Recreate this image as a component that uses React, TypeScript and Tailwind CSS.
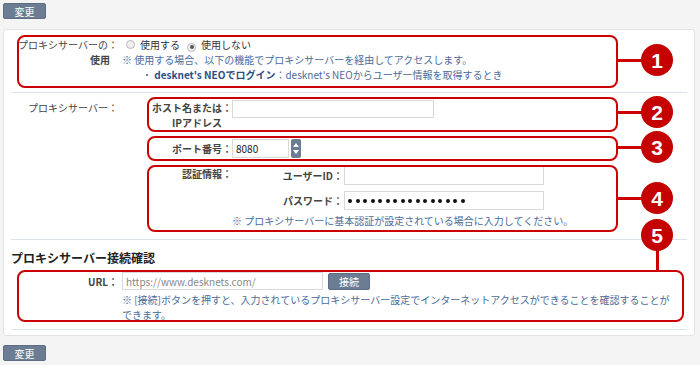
import React from "react";

const font = "font-['Noto_Sans_CJK_JP','Noto_Sans',sans-serif]";

function Btn({ label, className = "" }: { label: string; className?: string }) {
  return (
    <div
      className={`flex items-center justify-center rounded-[2px] border border-[#5d6d82] bg-[#6c7d93] text-[10px] text-white ${className}`}
    >
      {label}
    </div>
  );
}

function Radio({ checked }: { checked?: boolean }) {
  return (
    <span className="inline-flex h-[9px] w-[9px] items-center justify-center rounded-full border border-[#b8b8b8] bg-[#f0f0f0]">
      {checked && <span className="h-[4px] w-[4px] rounded-full bg-[#555]" />}
    </span>
  );
}

function Field({ className = "", children }: { className?: string; children?: React.ReactNode }) {
  return (
    <div className={`flex items-center border border-[#d9d9d9] bg-white px-[3px] text-[10px] text-[#222] ${className}`}>
      {children}
    </div>
  );
}

function Marker({ n, top }: { n: number; top: number }) {
  return (
    <div
      className="absolute left-[641px] flex h-[32px] w-[32px] items-center justify-center rounded-full bg-[#c40000] text-[21px] font-bold leading-none text-white font-['Liberation_Sans',sans-serif]"
      style={{ top }}
    >
      {n}
    </div>
  );
}

export default function App() {
  return (
    <div className={`relative h-[365px] w-[700px] overflow-hidden bg-[#f4f4f4] p-[3px] ${font}`}>
      <Btn label="変更" className="h-[16px] w-[43px]" />

      {/* Panel */}
      <div className="mt-[10px] h-[307px] w-[692px] rounded-[3px] border border-[#e3e3e3] bg-white px-[7px]">
        {/* proxy use */}
        <div className="flex border-b border-[#dce3ea] pb-[10px] pt-[7px] text-[10px] leading-[15px]">
          <div className="w-[107px] text-right text-[#444]">
            <div>プロキシサーバーの：</div>
            <div className="pr-[8px] font-bold">使用</div>
          </div>
          <div className="ml-[4px] text-[#333]">
            <div className="flex items-center">
              <span className="ml-[4px]"><Radio /></span>
              <span className="ml-[5px]">使用する</span>
              <span className="ml-[7px]"><Radio checked /></span>
              <span className="ml-[5px]">使用しない</span>
            </div>
            <div className="text-[#4b6b9c]">※ 使用する場合、以下の機能でプロキシサーバーを経由してアクセスします。</div>
            <div className="pl-[20px] text-[#4b6b9c]">
              ・ <span className="font-bold text-[#2c4d86]">desknet's NEOでログイン</span>：desknet's NEOからユーザー情報を取得するとき
            </div>
          </div>
        </div>

        {/* proxy server */}
        <div className="flex border-b border-[#dce3ea] pb-[7px] pt-[4px] text-[10px] leading-[15px]">
          <div className="w-[107px] pt-[3px] text-right text-[#444]">プロキシサーバー：</div>
          <div className="ml-[32px]">
            <div className="flex h-[35px] items-start">
              <div className="w-[82px] pt-[3px] text-right font-bold text-[#444]">
                <div>ホスト名または：</div>
                <div className="pr-[10px]">IPアドレス</div>
              </div>
              <Field className="mt-[3px] h-[18px] w-[202px]" />
            </div>
            <div className="mt-[4px] flex h-[25px] items-center">
              <div className="w-[82px] text-right font-bold text-[#444]">ポート番号：</div>
              <Field className="h-[19px] w-[57px]">8080</Field>
              <div className="ml-[2px] flex h-[19px] w-[10px] flex-col items-center justify-center gap-[3px] rounded-[2px] bg-[#6c7d93]">
                <svg width="6" height="4" viewBox="0 0 6 4"><path d="M3 0L6 4H0Z" fill="#fff" /></svg>
                <svg width="6" height="4" viewBox="0 0 6 4"><path d="M0 0H6L3 4Z" fill="#fff" /></svg>
              </div>
            </div>
            <div className="mt-[4px] flex h-[67px] items-start">
              <div className="w-[82px] pt-[1px] text-right font-bold text-[#444]">認証情報：</div>
              <div>
                <div className="mt-[1px] flex items-center">
                  <div className="w-[111px] text-right font-bold text-[#444]">ユーザーID：</div>
                  <Field className="ml-[1px] h-[19px] w-[200px]" />
                </div>
                <div className="mt-[6px] flex items-center">
                  <div className="w-[111px] text-right font-bold text-[#444]">パスワード：</div>
                  <Field className="ml-[1px] h-[19px] w-[200px] gap-[3.5px]">
                    {Array.from({ length: 16 }).map((_, i) => (
                      <span key={i} className="h-[4px] w-[4px] rounded-full bg-[#111]" />
                    ))}
                  </Field>
                </div>
                <div className="mt-[3px] text-[#4b6b9c]">※ プロキシサーバーに基本認証が設定されている場合に入力してください。</div>
              </div>
            </div>
          </div>
        </div>

        {/* connection check */}
        <div className="border-b border-[#dce3ea] pb-[7px] pt-[10px]">
          <div className="text-[12px] font-bold leading-[16px] text-[#222]">プロキシサーバー接続確認</div>
          <div className="mt-[6px] flex items-center text-[10px]">
            <div className="w-[107px] text-right font-bold text-[#444]">URL：</div>
            <Field className="ml-[4px] h-[18px] w-[201px] text-[#888]">https://www.desknets.com/</Field>
            <Btn label="接続" className="ml-[5px] h-[17px] w-[42px]" />
          </div>
          <div className="ml-[111px] mt-[2px] text-[10px] leading-[15px] text-[#4b6b9c]">
            ※ [接続]ボタンを押すと、入力されているプロキシサーバー設定でインターネットアクセスができることを確認することが
            <br />
            できます。
          </div>
        </div>
      </div>

      <Btn label="変更" className="mt-[9px] h-[16px] w-[43px]" />

      {/* annotations */}
      <div className="absolute left-[17px] top-[35px] h-[53px] w-[601px] rounded-[8px] border-2 border-[#cc0000]" />
      <div className="absolute left-[147px] top-[97px] h-[35px] w-[471px] rounded-[8px] border-2 border-[#cc0000]" />
      <div className="absolute left-[147px] top-[136px] h-[25px] w-[471px] rounded-[8px] border-2 border-[#cc0000]" />
      <div className="absolute left-[147px] top-[165px] h-[67px] w-[471px] rounded-[8px] border-2 border-[#cc0000]" />
      <div className="absolute left-[17px] top-[270px] h-[52px] w-[667px] rounded-[8px] border-2 border-[#cc0000]" />

      <div className="absolute left-[617px] top-[59px] h-[3px] w-[26px] bg-[#cc0000]" />
      <div className="absolute left-[617px] top-[111px] h-[3px] w-[26px] bg-[#cc0000]" />
      <div className="absolute left-[617px] top-[146px] h-[3px] w-[26px] bg-[#cc0000]" />
      <div className="absolute left-[617px] top-[197px] h-[3px] w-[26px] bg-[#cc0000]" />
      <div className="absolute left-[656px] top-[249px] h-[22px] w-[3px] bg-[#cc0000]" />

      <Marker n={1} top={44} />
      <Marker n={2} top={96} />
      <Marker n={3} top={131} />
      <Marker n={4} top={182} />
      <Marker n={5} top={219} />
    </div>
  );
}
